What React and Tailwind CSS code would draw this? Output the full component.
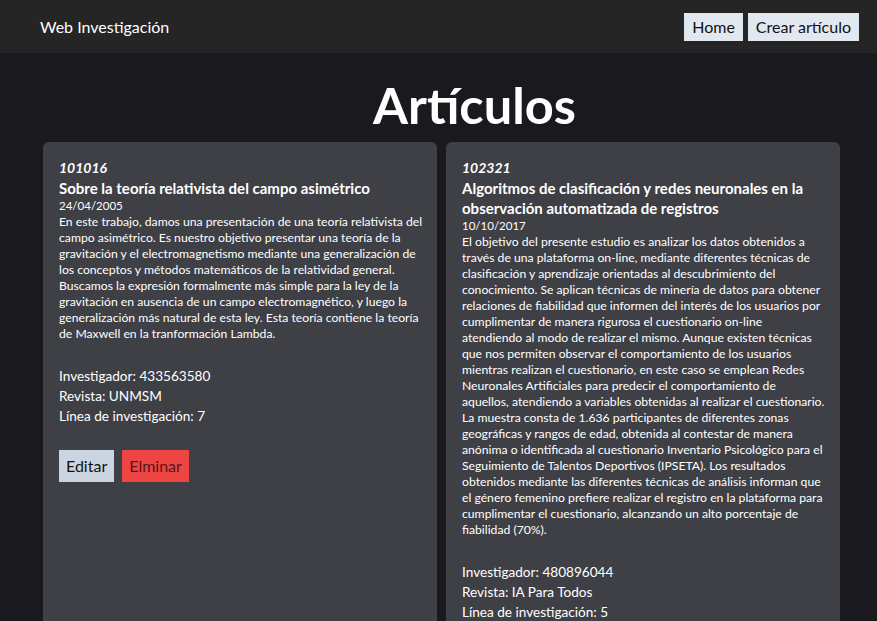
import React from "react";

const font = { fontFamily: "Lato, 'Open Sans', sans-serif" };

const articles = [
  {
    id: "101016",
    title: ["Sobre la teoría relativista del campo asimétrico"],
    date: "24/04/2005",
    desc: [
      "En este trabajo, damos una presentación de una teoría relativista del",
      "campo asimétrico. Es nuestro objetivo presentar una teoría de la",
      "gravitación y el electromagnetismo mediante una generalización de",
      "los conceptos y métodos matemáticos de la relatividad general.",
      "Buscamos la expresión formalmente más simple para la ley de la",
      "gravitación en ausencia de un campo electromagnético, y luego la",
      "generalización más natural de esta ley. Esta teoría contiene la teoría",
      "de Maxwell en la tranformación Lambda.",
    ],
    inv: "433563580",
    rev: "UNMSM",
    linea: "7",
  },
  {
    id: "102321",
    title: [
      "Algoritmos de clasificación y redes neuronales en la",
      "observación automatizada de registros",
    ],
    date: "10/10/2017",
    desc: [
      "El objetivo del presente estudio es analizar los datos obtenidos a",
      "través de una plataforma on-line, mediante diferentes técnicas de",
      "clasificación y aprendizaje orientadas al descubrimiento del",
      "conocimiento. Se aplican técnicas de minería de datos para obtener",
      "relaciones de fiabilidad que informen del interés de los usuarios por",
      "cumplimentar de manera rigurosa el cuestionario on-line",
      "atendiendo al modo de realizar el mismo. Aunque existen técnicas",
      "que nos permiten observar el comportamiento de los usuarios",
      "mientras realizan el cuestionario, en este caso se emplean Redes",
      "Neuronales Artificiales para predecir el comportamiento de",
      "aquellos, atendiendo a variables obtenidas al realizar el cuestionario.",
      "La muestra consta de 1.636 participantes de diferentes zonas",
      "geográficas y rangos de edad, obtenida al contestar de manera",
      "anónima o identificada al cuestionario Inventario Psicológico para el",
      "Seguimiento de Talentos Deportivos (IPSETA). Los resultados",
      "obtenidos mediante las diferentes técnicas de análisis informan que",
      "el género femenino prefiere realizar el registro en la plataforma para",
      "cumplimentar el cuestionario, alcanzando un alto porcentaje de",
      "fiabilidad (70%).",
    ],
    inv: "480896044",
    rev: "IA Para Todos",
    linea: "5",
  },
];

function Card({ a }) {
  return (
    <div className="bg-[#3f3f46] rounded-md pt-[16px] px-4 pb-6 text-white">
      <div className="text-sm font-bold italic leading-5">{a.id}</div>
      <div className="text-[15px] font-bold leading-5">
        {a.title.map((l, i) => (
          <div key={i} className="whitespace-nowrap">{l}</div>
        ))}
      </div>
      <div className="text-[11.5px] leading-4">{a.date}</div>
      <div className="text-[12.2px] leading-4">
        {a.desc.map((l, i) => (
          <div key={i} className="whitespace-nowrap">{l}</div>
        ))}
      </div>
      <div className="mt-6 text-[13.6px] leading-5">
        <div>Investigador: {a.inv}</div>
        <div>Revista: {a.rev}</div>
        <div>Línea de investigación: {a.linea}</div>
      </div>
      <div className="mt-6 flex gap-2">
        <button className="bg-[#cbd5e1] text-[#111] text-base px-[7px] h-8">Editar</button>
        <button className="bg-[#ef4444] text-[#5a1515] text-base px-[7px] h-8">Elminar</button>
      </div>
    </div>
  );
}

export default function App() {
  return (
    <div className="min-h-[621px] bg-[#1a191e]" style={font}>
      <nav className="h-[53px] bg-[#252525] flex items-center justify-between pl-10 pr-[18px]">
        <span className="text-white text-base">Web Investigación</span>
        <div className="flex gap-[5px]">
          <button className="bg-[#e2e8f0] text-[#111] text-base h-7 px-[8px]">Home</button>
          <button className="bg-[#e2e8f0] text-[#111] text-base h-7 px-[8px]">Crear artículo</button>
        </div>
      </nav>
      <h1 className="text-white text-[50.5px] font-bold text-center pl-[72px] pt-[28px] pb-[13px] leading-[48px]">Artículos</h1>
      <div className="grid grid-cols-2 gap-[9px] pl-[43px] pr-[37px]">
        {articles.map((a) => (
          <Card key={a.id} a={a} />
        ))}
      </div>
    </div>
  );
}
